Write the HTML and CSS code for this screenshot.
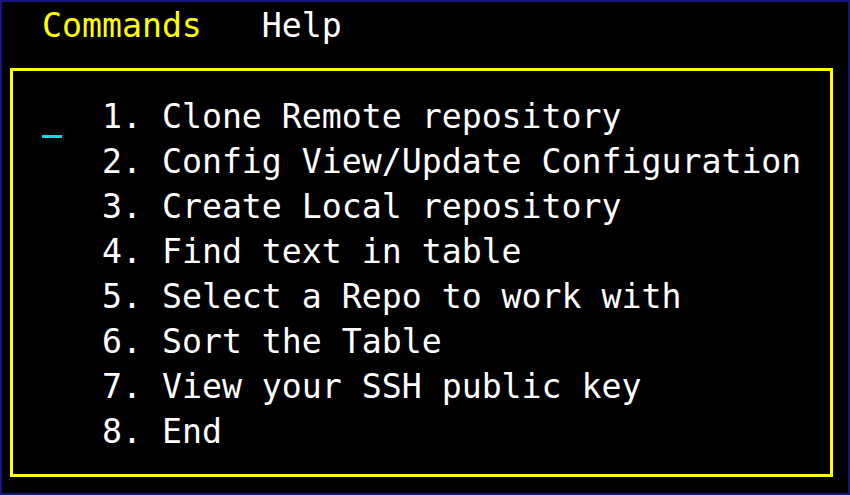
FILE: index.html
```html
<!DOCTYPE html>
<html>
<head>
<meta charset="utf-8">
<link rel="stylesheet" href="styles.css">
</head>
<body>
<div class="screen">
  <div class="menubar"><span class="menu-active">Commands</span>   <span class="menu-item">Help</span></div>
  <div class="panel">
    <div class="cursor"></div>
    <ol class="items">
      <li>1. Clone Remote repository</li>
      <li>2. Config View/Update Configuration</li>
      <li>3. Create Local repository</li>
      <li>4. Find text in table</li>
      <li>5. Select a Repo to work with</li>
      <li>6. Sort the Table</li>
      <li>7. View your SSH public key</li>
      <li>8. End</li>
    </ol>
  </div>
</div>
</body>
</html>
```
FILE: styles.css
```css
html, body {
  margin: 0;
  padding: 0;
  background: #000;
}
.screen {
  box-sizing: border-box;
  width: 850px;
  height: 495px;
  border: 2px solid #15157a;
  background: #000;
  font-family: "DejaVu Sans Mono", "Liberation Mono", monospace;
  font-size: 33.2px;
  line-height: 45px;
  color: #fff;
  overflow: hidden;
}
.menubar {
  white-space: pre;
  padding: 1px 0 0 40px;
  height: 45px;
}
.menu-active { color: #ffff00; }
.menu-item { color: #fff; }
.panel {
  box-sizing: border-box;
  display: flex;
  margin: 20px 0 0 8px;
  width: 823px;
  height: 409px;
  border: 3px solid #ffff00;
  padding: 23px 0 0 29px;
}
.cursor {
  width: 20px;
  height: 3px;
  margin-top: 41px;
  background: #00e0e0;
  flex: none;
}
.items {
  list-style: none;
  margin: 0 0 0 40px;
  padding: 0;
}
.items li {
  white-space: pre;
  height: 45px;
}
```
